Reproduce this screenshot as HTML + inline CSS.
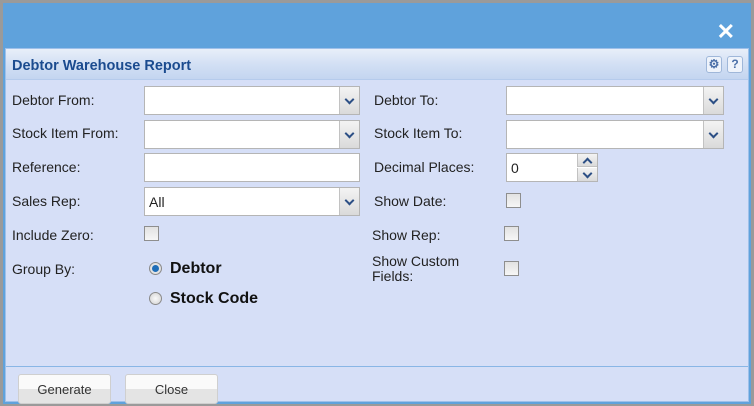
<!DOCTYPE html>
<html><head><style>
*{box-sizing:border-box;margin:0;padding:0}
body{width:754px;height:406px;background:#9a9a9a;position:relative;overflow:hidden;font-family:"Liberation Sans",Arial,sans-serif;font-size:14px;color:#222}
.dlg{position:absolute;left:3px;top:3px;width:748px;height:401px;background:#5fa2dc}
.x{position:absolute;right:16px;top:20px;color:#fff;font-size:22px;font-weight:bold;line-height:18px}
.panel{position:absolute;left:2px;top:45px;width:744px;height:354px;background:#d6dff7;border:1px solid #9ec0ea}
.tb{height:31px;background:linear-gradient(#e8eff9,#d3e0f4 50%,#c4d5f0);border-bottom:1px solid #b5cbec}
.tb span{position:absolute;left:6px;top:9px;font-size:14.5px;font-weight:bold;color:#1b4b8f}
.ico{position:absolute;top:7px;width:16px;height:17px;border:1px solid #9fb7d9;border-radius:3px;background:#eef3fb;font-size:12px;font-weight:bold;color:#4a6fa8;text-align:center;line-height:15px}
.l{position:absolute;font-size:14px;color:#222}
.sel{position:absolute;height:29px;background:#fff;border:1px solid #b5b5b5}
.sel i{position:absolute;right:0;top:0;width:20px;height:27px;background:linear-gradient(#f3f3f3,#dadada);border-left:1px solid #c2c2c2}
.sel i:after{content:"";position:absolute;left:6px;top:9px;width:5px;height:5px;border-right:2px solid #2c4f85;border-bottom:2px solid #2c4f85;transform:rotate(45deg)}
.sel b{position:absolute;left:4px;top:6px;font-weight:normal}
.sp{position:absolute;right:0;width:20px;height:13px;background:linear-gradient(#f3f3f3,#dadada);border-left:1px solid #c2c2c2}
.sp:after{content:"";position:absolute;left:6px;width:5px;height:5px;border-right:2px solid #2c4f85;border-bottom:2px solid #2c4f85}
.sp.u{top:0;border-bottom:1px solid #c2c2c2}.sp.u:after{top:5px;transform:rotate(-135deg)}
.sp.d{top:14px}.sp.d:after{top:2px;transform:rotate(45deg)}
.cb{position:absolute;width:15px;height:15px;border:1px solid #8e8e8e;background:linear-gradient(#e2e2e2,#f6f6f6)}
.rd{position:absolute;width:13px;height:13px;border-radius:50%;border:1px solid #8a8a8a;background:radial-gradient(#fafafa,#d0d0d0)}
.rd.on:after{content:"";position:absolute;left:2px;top:2px;width:7px;height:7px;border-radius:50%;background:#1e6db8}
.rl{position:absolute;font-weight:bold;font-size:16px;color:#111}
.foot{position:absolute;left:0;top:317px;width:742px;height:36px;border-top:1px solid #89b6e6}
.btn{position:absolute;top:7px;width:93px;height:30px;border:1px solid #cfcfcf;border-radius:3px;background:linear-gradient(#fafafa 50%,#e4e4e4 50%);font-size:13px;text-align:center;line-height:29px;color:#333}
</style></head><body>
<div class="dlg">
<div class="x">✕</div>
<div class="panel">
<div class="tb"><span>Debtor Warehouse Report</span>
<div class="ico" style="left:700px">⚙</div><div class="ico" style="left:721px">?</div></div>

<div class="l" style="left:6px;top:43px">Debtor From:</div>
<div class="sel" style="left:138px;top:37px;width:216px"><i></i></div>
<div class="l" style="left:368px;top:43px">Debtor To:</div>
<div class="sel" style="left:500px;top:37px;width:218px"><i></i></div>

<div class="l" style="left:6px;top:76px">Stock Item From:</div>
<div class="sel" style="left:138px;top:71px;width:216px"><i></i></div>
<div class="l" style="left:368px;top:76px">Stock Item To:</div>
<div class="sel" style="left:500px;top:71px;width:218px"><i></i></div>

<div class="l" style="left:6px;top:110px">Reference:</div>
<div class="sel" style="left:138px;top:104px;width:216px"></div>
<div class="l" style="left:368px;top:110px">Decimal Places:</div>
<div class="sel" style="left:500px;top:104px;width:92px"><b>0</b><span class="sp u"></span><span class="sp d"></span></div>

<div class="l" style="left:6px;top:144px">Sales Rep:</div>
<div class="sel" style="left:138px;top:138px;width:216px"><b>All</b><i></i></div>
<div class="l" style="left:368px;top:144px">Show Date:</div>
<div class="cb" style="left:500px;top:144px"></div>

<div class="l" style="left:6px;top:178px">Include Zero:</div>
<div class="cb" style="left:138px;top:177px"></div>
<div class="l" style="left:366px;top:178px">Show Rep:</div>
<div class="cb" style="left:498px;top:177px"></div>

<div class="l" style="left:6px;top:212px">Group By:</div>
<div class="rd on" style="left:143px;top:213px"></div><div class="rl" style="left:164px;top:211px">Debtor</div>
<div class="rd" style="left:143px;top:243px"></div><div class="rl" style="left:164px;top:241px">Stock Code</div>
<div class="l" style="left:366px;top:205px;line-height:15px">Show Custom<br>Fields:</div>
<div class="cb" style="left:498px;top:212px"></div>

<div class="foot">
<div class="btn" style="left:12px">Generate</div>
<div class="btn" style="left:119px">Close</div>
</div>
</div></div>
</body></html>
